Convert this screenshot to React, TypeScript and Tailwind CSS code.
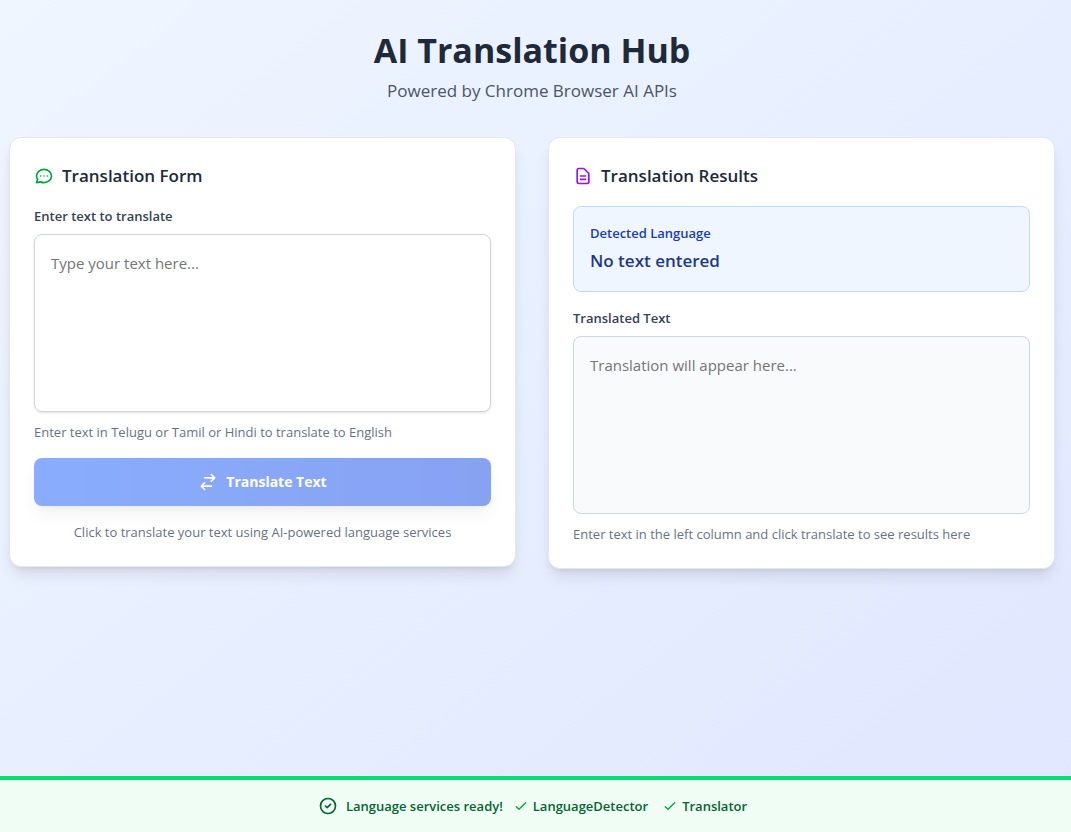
import { useState } from "react";

type IconProps = { path: string; className: string };

function Icon({ path, className }: IconProps) {
  return (
    <svg className={className} fill="none" stroke="currentColor" viewBox="0 0 24 24" aria-hidden="true">
      <path strokeLinecap="round" strokeLinejoin="round" strokeWidth={2} d={path} />
    </svg>
  );
}

const icons = {
  chat: "M8 12h.01M12 12h.01M16 12h.01M21 12c0 4.418-4.03 8-9 8a9.863 9.863 0 01-4.255-.949L3 20l1.395-3.72C3.512 15.042 3 13.574 3 12c0-4.418 4.03-8 9-8s9 3.582 9 8z",
  document:
    "M9 12h6m-6 4h6m2 5H7a2 2 0 01-2-2V5a2 2 0 012-2h5.586a1 1 0 01.707.293l5.414 5.414a1 1 0 01.293.707V19a2 2 0 01-2 2z",
  swap: "M8 7h12m0 0l-4-4m4 4l-4 4m0 6H4m0 0l4 4m-4-4l4-4",
  checkCircle: "M9 12l2 2 4-4m6 2a9 9 0 11-18 0 9 9 0 0118 0z",
  check: "M5 13l4 4L19 7",
};

function TranslationForm() {
  const [text, setText] = useState("");
  return (
    <section className="rounded-xl border border-gray-200 bg-white p-6 shadow-lg">
      <h2 className="mb-4 flex items-center text-[17px] leading-7 font-semibold text-gray-800">
        <Icon path={icons.chat} className="mr-2 size-5 text-green-600" />
        Translation Form
      </h2>
      <label htmlFor="source" className="mb-2 block text-[13px] leading-5 font-semibold text-gray-700">
        Enter text to translate
      </label>
      <textarea
        id="source"
        value={text}
        onChange={(e) => setText(e.target.value)}
        placeholder="Type your text here..."
        className="block h-[178px] w-full resize-none rounded-lg border border-gray-300 p-4 text-[15px] leading-6 shadow-sm placeholder:text-[#757575]"
      />
      <p className="mt-2.5 text-[13px] leading-5 text-gray-500">
        Enter text in Telugu or Tamil or Hindi to translate to English
      </p>
      <button
        type="button"
        disabled={!text}
        className="mt-4 flex h-12 w-full items-center justify-center rounded-lg bg-linear-to-r from-blue-600 to-blue-700 text-sm leading-6 font-bold text-white shadow-lg disabled:opacity-50"
      >
        <Icon path={icons.swap} className="mr-2 size-5" />
        Translate Text
      </button>
      <p className="mt-4 text-center text-[13px] leading-5 text-gray-500">
        Click to translate your text using AI-powered language services
      </p>
    </section>
  );
}

function TranslationResults() {
  return (
    <section className="rounded-xl border border-gray-200 bg-white p-6 shadow-lg">
      <h2 className="mb-4 flex items-center text-[17px] leading-7 font-semibold text-gray-800">
        <Icon path={icons.document} className="mr-2 size-5 text-purple-600" />
        Translation Results
      </h2>
      <div className="mb-4 rounded-lg border border-blue-200 bg-blue-50 p-4">
        <h3 className="mb-1 text-[13px] leading-5 font-semibold text-blue-800">Detected Language</h3>
        <p className="text-[17px] leading-7 font-semibold text-blue-900">No text entered</p>
      </div>
      <label htmlFor="result" className="mb-2 block text-[13px] leading-5 font-semibold text-gray-700">
        Translated Text
      </label>
      <textarea
        id="result"
        readOnly
        placeholder="Translation will appear here..."
        className="block h-[178px] w-full resize-none rounded-lg border border-gray-300 bg-gray-50 p-4 text-[15px] leading-6 placeholder:text-[#757575]"
      />
      <p className="mt-2.5 text-[13px] leading-5 text-gray-500">
        Enter text in the left column and click translate to see results here
      </p>
    </section>
  );
}

function StatusBar() {
  return (
    <footer className="flex items-center justify-center border-t-4 border-[#05df72] bg-green-50 py-4 pr-1.5 text-[13px] leading-5 font-semibold text-green-800">
      <Icon path={icons.checkCircle} className="mr-2 size-5" />
      <span>Language services ready!</span>
      <span className="ml-2.5 flex items-center">
        <Icon path={icons.check} className="mr-1 size-4 text-green-600" />
        LanguageDetector
      </span>
      <span className="ml-3.5 flex items-center">
        <Icon path={icons.check} className="mr-1 size-4 text-green-600" />
        Translator
      </span>
    </footer>
  );
}

export default function App() {
  return (
    <div className="flex min-h-screen flex-col bg-linear-to-br from-blue-50 to-indigo-100 font-['Open_Sans','Noto_Sans',sans-serif]">
      <main className="flex-1 pt-[30px] pr-4 pb-8 pl-[9px]">
        <header className="mb-8 text-center">
          <h1 className="text-[34px] leading-10 font-bold text-gray-800">AI Translation Hub</h1>
          <p className="mt-[7px] text-[17px] leading-7 text-gray-600">Powered by Chrome Browser AI APIs</p>
        </header>
        <div className="grid grid-cols-1 items-start gap-8 md:grid-cols-2">
          <TranslationForm />
          <TranslationResults />
        </div>
      </main>
      <StatusBar />
    </div>
  );
}
